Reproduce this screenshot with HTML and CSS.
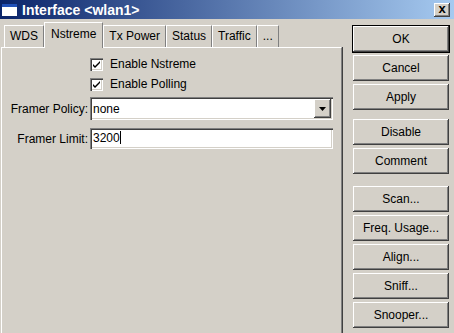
FILE: index.html
```html
<!doctype html>
<html>
<head>
<meta charset="utf-8">
<title>Interface &lt;wlan1&gt;</title>
<link rel="stylesheet" href="styles.css">
</head>
<body>
<div class="window">
	<div class="titlebar">
		<span class="ticon"></span>
		<span class="title">Interface &lt;wlan1&gt;</span>
		<span class="close">x</span>
	</div>
	<div class="content">
		<div class="main">
			<div class="tabs">
				<span class="tab">WDS</span>
				<span class="tab active">Nstreme</span>
				<span class="tab">Tx Power</span>
				<span class="tab">Status</span>
				<span class="tab">Traffic</span>
				<span class="tab">...</span>
			</div>
			<div class="panel">
				<div class="form">
					<span></span>
					<label class="check"><span class="box"><svg width="9" height="9" viewBox="0 0 9 9"><path d="M1 4 L3 6 L8 1 L8 3 L3 8 L1 6 Z" fill="#000"/></svg></span>Enable Nstreme</label>
					<span></span>
					<label class="check"><span class="box"><svg width="9" height="9" viewBox="0 0 9 9"><path d="M1 4 L3 6 L8 1 L8 3 L3 8 L1 6 Z" fill="#000"/></svg></span>Enable Polling</label>
					<span class="lbl policy">Framer Policy:</span>
					<div class="combo">
						<span class="val">none</span>
						<span class="drop"><svg width="7" height="4" viewBox="0 0 7 4"><path d="M0 0 H7 L3.5 4 Z" fill="#000"/></svg></span>
					</div>
					<span class="lbl limit">Framer Limit:</span>
					<div class="input">3200<span class="caret"></span></div>
				</div>
			</div>
		</div>
		<div class="side">
			<div class="group">
				<a href="javascript:;" class="btn default">OK</a>
				<a href="javascript:;" class="btn">Cancel</a>
				<a href="javascript:;" class="btn">Apply</a>
			</div>
			<div class="group">
				<a href="javascript:;" class="btn">Disable</a>
				<a href="javascript:;" class="btn">Comment</a>
			</div>
			<div class="group tools">
				<a href="javascript:;" class="btn">Scan...</a>
				<a href="javascript:;" class="btn">Freq. Usage...</a>
				<a href="javascript:;" class="btn">Align...</a>
				<a href="javascript:;" class="btn">Sniff...</a>
				<a href="javascript:;" class="btn">Snooper...</a>
			</div>
		</div>
	</div>
</div>
</body>
</html>
```

FILE: styles.css
```css
*{margin:0;padding:0;box-sizing:border-box;}
body{background:#d4d0c8;font-family:"Liberation Sans",Arial,sans-serif;font-size:12px;color:#000;}
.window{width:454px;height:333px;overflow:hidden;background:#d4d0c8;display:flex;flex-direction:column;}

/* title bar */
.titlebar{height:19px;flex:none;display:flex;align-items:center;padding:0 4px 0 2px;background:linear-gradient(to right,#0a246a,#a6caf0);}
.ticon{width:15px;height:12px;background:#fff;border-top:3px solid #2050b8;margin-right:5px;}
.title{font-weight:bold;font-size:14px;color:#fff;flex:1;}
.close{width:16px;height:14px;background:#d4d0c8;font-weight:bold;font-size:13px;line-height:12px;text-align:center;box-shadow:inset -1px -1px #404040,inset 1px 1px #fff,inset -2px -2px #808080;}

.content{flex:1;display:flex;}

/* tabs + panel */
.main{width:342px;flex:none;display:flex;flex-direction:column;padding-left:1px;}
.tabs{height:28px;flex:none;display:flex;align-items:flex-end;padding-left:3px;}
.tab{height:22px;line-height:21px;padding:0 5px;border-top:1px solid #fff;border-left:1px solid #fff;border-right:1px solid #808080;white-space:nowrap;}
.tab.active{height:26px;line-height:22px;padding:0 6px;margin-bottom:-1px;position:relative;background:#d4d0c8;z-index:1;}
.panel{flex:1;border-top:1px solid #fff;border-left:1px solid #fff;border-right:1px solid #808080;box-shadow:1px 0 #404040;}

.form{display:grid;grid-template-columns:86px 1fr;column-gap:2px;padding:6px 8px 0 0;align-items:center;}
.check{height:20px;display:flex;align-items:center;}
.box{width:13px;height:13px;background:#fff;margin-right:7px;display:flex;align-items:center;justify-content:center;box-shadow:inset 1px 1px #808080,inset 2px 2px #404040,inset -1px -1px #fff,inset -2px -2px #d4d0c8;}
.lbl{text-align:right;white-space:nowrap;}
.lbl.policy{margin-top:3px;}
.lbl.limit{margin-top:8px;}
.combo{height:23px;margin-top:3px;background:#fff;display:flex;align-items:center;padding:2px;box-shadow:inset 1px 1px #808080,inset 2px 2px #404040,inset -1px -1px #fff,inset -2px -2px #d4d0c8;}
.combo .val{flex:1;padding-left:1px;}
.drop{width:17px;height:19px;background:#d4d0c8;display:flex;align-items:center;justify-content:center;box-shadow:inset -1px -1px #404040,inset 1px 1px #fff,inset -2px -2px #808080;}
.input{height:21px;margin-top:8px;background:#fff;line-height:21px;padding-left:3px;box-shadow:inset 1px 1px #808080,inset 2px 2px #404040,inset -1px -1px #fff,inset -2px -2px #d4d0c8;}
.caret{display:inline-block;width:1px;height:13px;background:#000;vertical-align:-2px;}

/* side buttons */
.side{flex:1;display:flex;flex-direction:column;gap:9px;padding:7px 5px 0 11px;}
.group{display:flex;flex-direction:column;gap:3px;}
.group.tools{margin-top:3px;}
.btn{display:block;height:26px;line-height:26px;text-align:center;color:#000;text-decoration:none;background:#d4d0c8;box-shadow:inset -1px -1px #404040,inset 1px 1px #fff,inset -2px -2px #808080,inset 2px 2px #d4d0c8;}
.btn.default{box-shadow:0 0 0 1px #000,inset -1px -1px #404040,inset 1px 1px #fff,inset -2px -2px #808080;}
```
